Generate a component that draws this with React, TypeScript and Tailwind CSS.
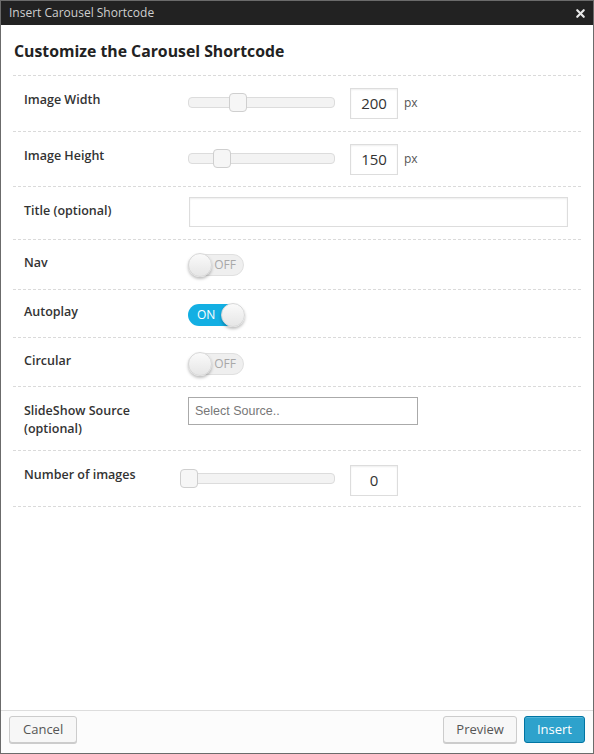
import { X } from "lucide-react";

const font = { fontFamily: '"Open Sans", "Liberation Sans", sans-serif' };

const Slider = ({ pct }: { pct: number }) => (
    <div className="relative w-[147px] h-[11px] rounded-[4px] border border-[#dcdcdc] bg-[#f3f3f3]">
        <div
            className="absolute top-[-5px] w-[18px] h-[19px] -ml-[9px] rounded-[4px] border border-[#cfcfcf] bg-[#f6f6f6]"
            style={{ left: `${pct}%` }}
        />
    </div>
);

const NumBox = ({ value }: { value: string }) => (
    <div className="w-[48px] h-[31px] border border-[#dddddd] shadow-[inset_0_1px_2px_rgba(0,0,0,0.07)] flex items-center justify-center text-[15px] text-[#333]">
        {value}
    </div>
);

const Toggle = ({ on }: { on: boolean }) =>
    on ? (
        <div className="relative w-[56px] h-[22px] rounded-full bg-[#13afe3] flex items-center pl-[9px]">
            <span className="text-[12px] text-white">ON</span>
            <div className="absolute right-[-1px] top-[-1px] w-[24px] h-[24px] rounded-full bg-gradient-to-b from-[#fafafa] to-[#e6e6e6] border border-[#d8d8d8] shadow-[0_2px_3px_rgba(0,0,0,0.25)]" />
        </div>
    ) : (
        <div className="relative w-[56px] h-[22px] rounded-full bg-[#efefef] border border-[#e0e0e0] flex items-center justify-end pr-[7px]">
            <span className="text-[12px] text-[#a8a8a8]">OFF</span>
            <div className="absolute left-[-1px] top-[-2px] w-[24px] h-[24px] rounded-full bg-gradient-to-b from-[#fafafa] to-[#e6e6e6] border border-[#d8d8d8] shadow-[0_2px_3px_rgba(0,0,0,0.25)]" />
        </div>
    );

const Label = ({ children, cls }: { children: React.ReactNode; cls: string }) => (
    <div className={`w-[164px] shrink-0 text-[12.5px] font-semibold text-[#333] leading-[18px] ${cls}`}>{children}</div>
);

export default function App() {
    return (
        <div className="w-[594px] h-[754px] flex flex-col border border-[#6b6b6b] bg-white" style={font}>
            <div className="h-[24px] shrink-0 bg-[#222] flex items-center justify-between pl-[8px] pr-[6px]">
                <span className="text-[12px] text-[#cfcfcf]">Insert Carousel Shortcode</span>
                <X className="w-[13px] h-[13px] text-[#e8e8e8]" strokeWidth={4} />
            </div>

            <div className="flex-1 px-[12px]">
                <h1 className="pt-[14px] pb-[12px] pl-[1px] text-[15.8px] font-bold text-[#222] leading-[24px] border-b border-dashed border-[#dadada]">
                    Customize the Carousel Shortcode
                </h1>

                <div className="h-[56px] flex items-start pl-[11px] pt-[12px] border-b border-dashed border-[#dadada]">
                    <Label cls="mt-[3px]">Image Width</Label>
                    <div className="mt-[9px]"><Slider pct={34} /></div>
                    <div className="ml-[15px]"><NumBox value="200" /></div>
                    <span className="ml-[6px] mt-[6px] text-[12px] text-[#555]">px</span>
                </div>

                <div className="h-[55px] flex items-start pl-[11px] pt-[12px] border-b border-dashed border-[#dadada]">
                    <Label cls="mt-[3px]">Image Height</Label>
                    <div className="mt-[9px]"><Slider pct={23} /></div>
                    <div className="ml-[15px]"><NumBox value="150" /></div>
                    <span className="ml-[6px] mt-[6px] text-[12px] text-[#555]">px</span>
                </div>

                <div className="h-[53px] flex items-start pl-[11px] pt-[10px] border-b border-dashed border-[#dadada]">
                    <Label cls="mt-[5px]">Title (optional)</Label>
                    <div className="ml-[1px] w-[379px] h-[30px] border border-[#dddddd] shadow-[inset_0_1px_2px_rgba(0,0,0,0.07)]" />
                </div>

                <div className="h-[50px] flex items-start pl-[11px] pt-[14px] border-b border-dashed border-[#dadada]">
                    <Label cls="mt-0">Nav</Label>
                    <Toggle on={false} />
                </div>

                <div className="h-[48px] flex items-start pl-[11px] pt-[14px] border-b border-dashed border-[#dadada]">
                    <Label cls="-mt-[1px]">Autoplay</Label>
                    <Toggle on={true} />
                </div>

                <div className="h-[49px] flex items-start pl-[11px] pt-[15px] border-b border-dashed border-[#dadada]">
                    <Label cls="-mt-[1px]">Circular</Label>
                    <Toggle on={false} />
                </div>

                <div className="h-[64px] flex items-start pl-[11px] pt-[10px] border-b border-dashed border-[#dadada]">
                    <Label cls="mt-[5px]">SlideShow Source<br />(optional)</Label>
                    <div
                        className="w-[230px] h-[28px] border border-[#aaaaaa] flex items-center pl-[6px] text-[12.5px] text-[#777]"
                        style={{ fontFamily: '"Liberation Sans", Arial, sans-serif' }}
                    >
                        Select Source..
                    </div>
                </div>

                <div className="h-[56px] flex items-start pl-[11px] pt-[14px] border-b border-dashed border-[#dadada]">
                    <Label cls="mt-[1px]">Number of images</Label>
                    <div className="mt-[8px]"><Slider pct={0} /></div>
                    <div className="ml-[15px]"><NumBox value="0" /></div>
                </div>
            </div>

            <div className="h-[43px] shrink-0 bg-[#fcfcfc] border-t border-[#dddddd] flex items-start justify-between pt-[5px] px-[8px]">
                <button className="h-[27px] px-[13px] rounded-[3px] border border-[#cccccc] bg-[#f7f7f7] text-[13px] text-[#555] shadow-[0_1px_0_#ccc]">
                    Cancel
                </button>
                <div className="flex gap-[7px]">
                    <button className="h-[27px] px-[12px] rounded-[3px] border border-[#cccccc] bg-[#f7f7f7] text-[13px] text-[#555] shadow-[0_1px_0_#ccc]">
                        Preview
                    </button>
                    <button className="h-[27px] px-[12px] rounded-[3px] border border-[#0074a2] bg-[#2ea2cc] text-[13px] text-white shadow-[inset_0_1px_0_rgba(120,200,230,0.5)]">
                        Insert
                    </button>
                </div>
            </div>
        </div>
    );
}
